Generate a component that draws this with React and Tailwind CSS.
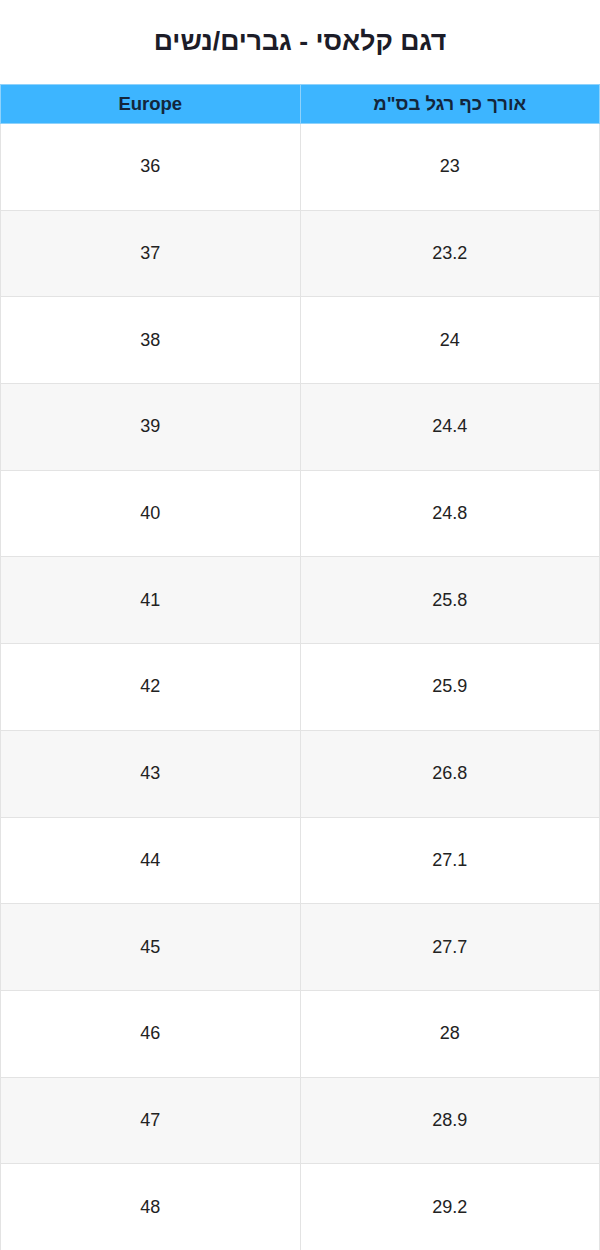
const rows = [
  ['23', '36'],
  ['23.2', '37'],
  ['24', '38'],
  ['24.4', '39'],
  ['24.8', '40'],
  ['25.8', '41'],
  ['25.9', '42'],
  ['26.8', '43'],
  ['27.1', '44'],
  ['27.7', '45'],
  ['28', '46'],
  ['28.9', '47'],
  ['29.2', '48'],
];

export default function App() {
  return (
    <div dir="rtl" className="w-[600px] bg-white" style={{ fontFamily: '"Liberation Sans", Arial, sans-serif' }}>
      <div className="flex h-[84px] items-center justify-center">
        <h1 className="text-[26.6px] font-bold text-[#1c1c28]">דגם קלאסי - גברים/נשים</h1>
      </div>
      <table className="w-full table-fixed border-collapse">
        <thead>
          <tr className="h-[39px] bg-[#3db5ff] text-[18.5px] font-bold text-[#13263b]">
            <th className="border border-[#8fd2fb] font-bold">אורך כף רגל בס"מ</th>
            <th className="border border-[#8fd2fb] font-bold">Europe</th>
          </tr>
        </thead>
        <tbody>
          {rows.map(([cm, eu], i) => (
            <tr key={eu} className={`h-[86.7px] text-[18px] text-[#222] ${i % 2 ? 'bg-[#f7f7f7]' : 'bg-white'}`}>
              <td className="border border-[#e3e3e3] text-center">{cm}</td>
              <td className="border border-[#e3e3e3] text-center">{eu}</td>
            </tr>
          ))}
        </tbody>
      </table>
    </div>
  );
}
